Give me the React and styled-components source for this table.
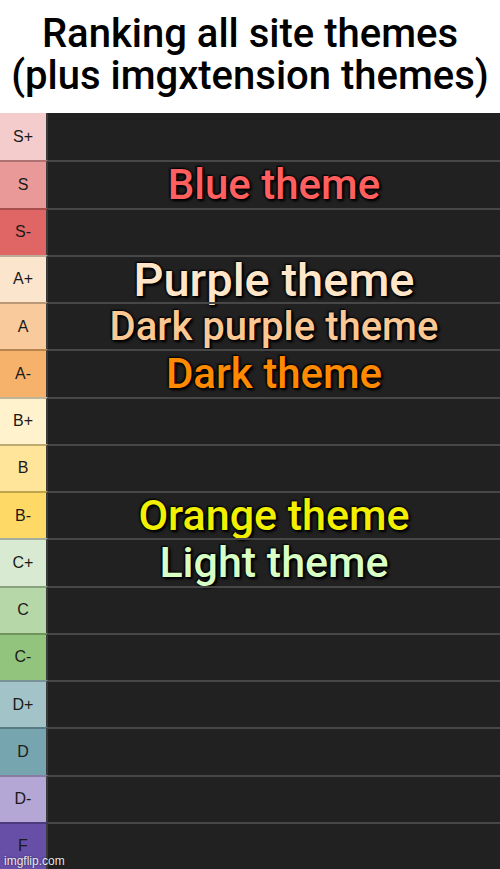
import React from 'react';
import styled, { createGlobalStyle } from 'styled-components';

const tiers = [
  { label: 'S+', color: '#f4cccc' },
  { label: 'S', color: '#ea9999', text: 'Blue theme', tone: '#ff5f5f', size: 42 },
  { label: 'S-', color: '#e06666' },
  { label: 'A+', color: '#fce5cd', text: 'Purple theme', tone: '#ffe6c8', size: 47 },
  { label: 'A', color: '#f9cb9c', text: 'Dark purple theme', tone: '#fbc894', size: 40 },
  { label: 'A-', color: '#f6b26b', text: 'Dark theme', tone: '#ff8a00', size: 42 },
  { label: 'B+', color: '#fff2cc' },
  { label: 'B', color: '#ffe599' },
  { label: 'B-', color: '#ffd966', text: 'Orange theme', tone: '#f2f000', size: 43 },
  { label: 'C+', color: '#d9ead3', text: 'Light theme', tone: '#d8ffc4', size: 43 },
  { label: 'C', color: '#b6d7a8' },
  { label: 'C-', color: '#93c47d' },
  { label: 'D+', color: '#a2c4c9' },
  { label: 'D', color: '#76a5af' },
  { label: 'D-', color: '#b4a7d6' },
  { label: 'F', color: '#674ea7' },
];

const GlobalStyle = createGlobalStyle`
  html, body {
    margin: 0;
    padding: 0;
    background: #fff;
  }
`;

const Page = styled.div`
  position: relative;
  width: 500px;
  height: 869px;
  display: flex;
  flex-direction: column;
  overflow: hidden;
`;

const Title = styled.div`
  height: 113px;
  flex-shrink: 0;
  display: flex;
  flex-direction: column;
  align-items: center;
  justify-content: center;
  padding-bottom: 4px;
  box-sizing: border-box;
  font-family: 'Roboto', 'Open Sans', sans-serif;
  font-weight: 500;
  font-size: 40px;
  line-height: 42px;
  color: #000;
  white-space: nowrap;
`;

const Board = styled.div`
  flex: 1;
  min-height: 0;
  display: grid;
  grid-template-rows: repeat(16, minmax(0, 1fr));
  background: #212121;
`;

const Row = styled.div`
  display: flex;
  min-height: 0;
  border-top: 2px solid #474747;
  &:first-child {
    border-top: none;
  }
`;

const Label = styled.div`
  width: 46px;
  flex-shrink: 0;
  background: ${(p) => p.color};
  border-right: 2px solid #3a3a3a;
  margin-top: -2px;
  border-top: 2px solid rgba(0, 0, 0, 0.25);
  display: flex;
  align-items: center;
  justify-content: center;
  font-family: 'Liberation Sans', Arial, sans-serif;
  font-size: 16px;
  color: #1a1a1a;
  ${Row}:first-child & {
    margin-top: 0;
    border-top: none;
  }
`;

const Cell = styled.div`
  flex: 1;
  min-height: 0;
  display: flex;
  align-items: center;
  justify-content: center;
`;

const Entry = styled.span`
  font-family: 'Roboto', 'Open Sans', sans-serif;
  font-weight: 500;
  font-size: ${(p) => p.size}px;
  line-height: 1;
  color: ${(p) => p.tone};
  white-space: nowrap;
  text-shadow: 0 0 2px #000, 1px 1px 2px #000, -1px -1px 2px #000, 2px 2px 3px #000;
`;

const Watermark = styled.span`
  position: absolute;
  left: 4px;
  bottom: 1px;
  font-family: 'Liberation Sans', Arial, sans-serif;
  font-size: 12px;
  color: rgba(255, 255, 255, 0.9);
  text-shadow: 0 0 2px rgba(0, 0, 0, 0.6);
`;

const App = () => {
  return (
    <Page>
      <GlobalStyle />
      <Title>
        <div>Ranking all site themes</div>
        <div>(plus imgxtension themes)</div>
      </Title>
      <Board>
        {tiers.map((t) => (
          <Row key={t.label}>
            <Label color={t.color}>{t.label}</Label>
            <Cell>
              {t.text ? (
                <Entry tone={t.tone} size={t.size}>
                  {t.text}
                </Entry>
              ) : null}
            </Cell>
          </Row>
        ))}
      </Board>
      <Watermark>imgflip.com</Watermark>
    </Page>
  );
};

export default App;
